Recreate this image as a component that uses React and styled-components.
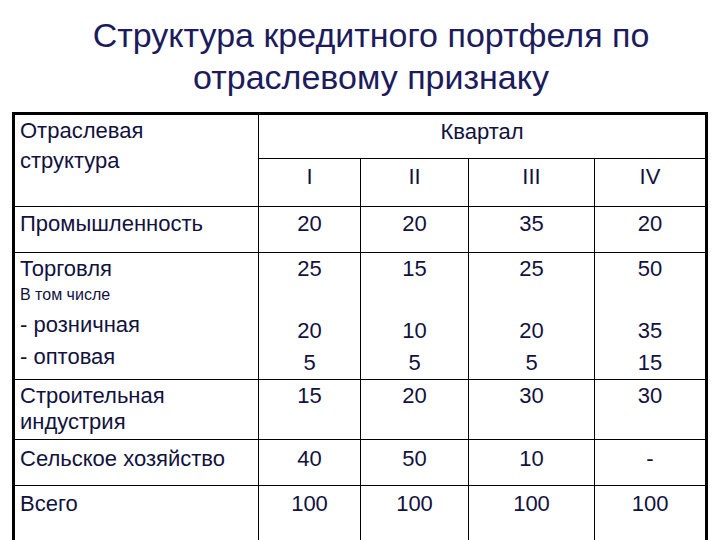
import styled, { createGlobalStyle } from 'styled-components';

const GlobalStyle = createGlobalStyle`
  html, body {
    margin: 0;
    padding: 0;
    background: #ffffff;
  }
  body {
    width: 720px;
    height: 540px;
    overflow: hidden;
    font-family: "Liberation Sans", Arial, sans-serif;
  }
`;

const Page = styled.div`
  width: 720px;
  height: 540px;
  overflow: hidden;
  padding-top: 14px;
  box-sizing: border-box;
`;

const Title = styled.h1`
  margin: 0 0 14px 0;
  padding-left: 22px;
  font-size: 34px;
  font-weight: normal;
  line-height: 42px;
  text-align: center;
  color: #1c1c5c;
`;

const Table = styled.table`
  margin-left: 12px;
  width: 693px;
  border-collapse: collapse;
  border: 3px solid #000;
  table-layout: fixed;
  color: #12123e;
  font-size: 22px;
`;

const Row = styled.tr`
  height: ${(p) => p.$h}px;
`;

const Cell = styled.td`
  border: 1px solid #000;
  padding: ${(p) => p.$pt ?? 4}px 5px 0;
  vertical-align: top;
  line-height: ${(p) => p.$lh ?? 26}px;
  text-align: ${(p) => (p.$center ? 'center' : 'left')};
  white-space: nowrap;
`;

const Small = styled.div`
  font-size: 16px;
  line-height: 28px;
`;

const Sub = styled.div`
  line-height: 32px;
  margin-top: ${(p) => p.$mt ?? 0}px;
`;

const quarters = ['I', 'II', 'III', 'IV'];

export default function App() {
  return (
    <>
      <GlobalStyle />
      <Page>
        <Title>
          Структура кредитного портфеля по
          <br />
          отраслевому признаку
        </Title>
        <Table>
          <colgroup>
            <col style={{ width: 245 }} />
            <col style={{ width: 102 }} />
            <col style={{ width: 108 }} />
            <col style={{ width: 126 }} />
            <col style={{ width: 112 }} />
          </colgroup>
          <tbody>
            <Row $h={45}>
              <Cell rowSpan={2} $lh={30} $pt={1}>
                Отраслевая
                <br />
                структура
              </Cell>
              <Cell colSpan={4} $center>
                Квартал
              </Cell>
            </Row>
            <Row $h={48}>
              {quarters.map((q) => (
                <Cell key={q} $center $pt={5}>
                  {q}
                </Cell>
              ))}
            </Row>
            <Row $h={46}>
              <Cell>Промышленность</Cell>
              {['20', '20', '35', '20'].map((v, i) => (
                <Cell key={i} $center>
                  {v}
                </Cell>
              ))}
            </Row>
            <Row $h={127}>
              <Cell $pt={3} $lh={25}>
                Торговля
                <Small>В том числе</Small>
                <Sub>- розничная</Sub>
                <Sub>- оптовая</Sub>
              </Cell>
              {[
                ['25', '20', '5'],
                ['15', '10', '5'],
                ['25', '20', '5'],
                ['50', '35', '15'],
              ].map(([top, a, b], i) => (
                <Cell key={i} $center $pt={3} $lh={25}>
                  {top}
                  <Sub $mt={34}>{a}</Sub>
                  <Sub>{b}</Sub>
                </Cell>
              ))}
            </Row>
            <Row $h={60}>
              <Cell $pt={3}>
                Строительная
                <br />
                индустрия
              </Cell>
              {['15', '20', '30', '30'].map((v, i) => (
                <Cell key={i} $center $pt={3}>
                  {v}
                </Cell>
              ))}
            </Row>
            <Row $h={46}>
              <Cell $pt={6}>Сельское хозяйство</Cell>
              {['40', '50', '10', '-'].map((v, i) => (
                <Cell key={i} $center $pt={6}>
                  {v}
                </Cell>
              ))}
            </Row>
            <Row $h={62}>
              <Cell $pt={5}>Всего</Cell>
              {['100', '100', '100', '100'].map((v, i) => (
                <Cell key={i} $center $pt={5}>
                  {v}
                </Cell>
              ))}
            </Row>
          </tbody>
        </Table>
      </Page>
    </>
  );
}
